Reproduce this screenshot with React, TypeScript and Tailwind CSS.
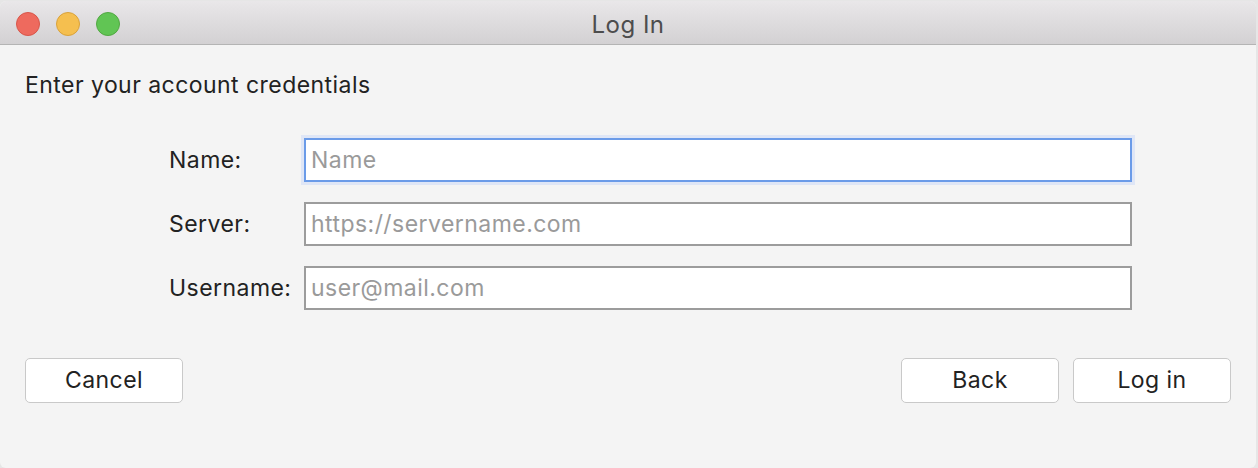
import React from 'react';

const font = { fontFamily: 'Inter, "Liberation Sans", sans-serif' };

const Field = ({ label, placeholder, focused }: { label: string; placeholder: string; focused?: boolean }) => (
  <div className="flex items-center h-[44px]">
    <label className="w-[135px] text-[23px] tracking-[0.45px] text-[#222]">{label}</label>
    <input
      placeholder={placeholder}
      className={
        focused
          ? 'w-[828px] h-[44px] bg-white border-2 border-[#6b9be8] shadow-[0_0_0_3px_#dfe6f6] outline-none px-[5px] text-[23px] tracking-[0.45px] placeholder:text-[#9a9a9a]'
          : 'w-[828px] h-[44px] bg-white border-2 border-[#9c9c9c] outline-none px-[5px] text-[23px] tracking-[0.45px] placeholder:text-[#9a9a9a]'
      }
    />
  </div>
);

const Button = ({ children }: { children: React.ReactNode }) => (
  <button className="w-[158px] h-[45px] bg-white border-[1.5px] border-[#c9c9c9] rounded-[5px] text-[23px] tracking-[0.45px] text-[#222]">
    {children}
  </button>
);

export default function App() {
  return (
    <div className="w-[1258px] h-[468px] bg-[#e6e6e6] pt-[1px] pr-[2px] overflow-hidden" style={font}>
      <div className="w-[1256px] h-[467px] bg-[#f4f4f4] rounded-[6px] overflow-hidden flex flex-col">
        {/* Title bar */}
        <div className="h-[44px] shrink-0 bg-gradient-to-b from-[#e9e7e9] to-[#d3d1d3] border-b border-[#b4b4b4] flex items-center pt-[3px] relative">
          <div className="flex gap-[16px] pl-[16px]">
            <span className="w-[24px] h-[24px] rounded-full bg-[#ee6a5e] border border-[#d8564a]" />
            <span className="w-[24px] h-[24px] rounded-full bg-[#f5bf4f] border border-[#d9a23b]" />
            <span className="w-[24px] h-[24px] rounded-full bg-[#61c554] border border-[#52a842]" />
          </div>
          <div className="absolute inset-0 pt-[4px] flex items-center justify-center text-[24px] tracking-[0.5px] text-[#4d4d4d]">Log In</div>
        </div>

        {/* Content */}
        <div className="px-[25px] pt-[25px]">
          <div className="text-[23px] tracking-[0.45px] leading-[30px] text-[#222]">Enter your account credentials</div>

          <div className="flex flex-col gap-[20px] pl-[144px] mt-[38px]">
            <Field label="Name:" placeholder="Name" focused />
            <Field label="Server:" placeholder="https://servername.com" />
            <Field label="Username:" placeholder="user@mail.com" />
          </div>

          <div className="flex justify-between mt-[48px]">
            <Button>Cancel</Button>
            <div className="flex gap-[14px]">
              <Button>Back</Button>
              <Button>Log in</Button>
            </div>
          </div>
        </div>
      </div>
    </div>
  );
}
